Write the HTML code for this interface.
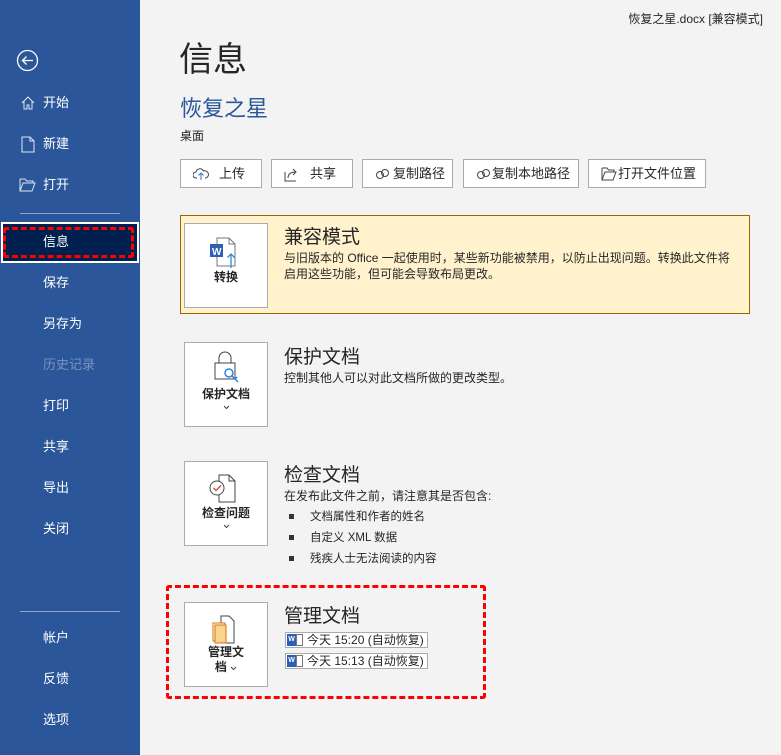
<!DOCTYPE html>
<html><head><meta charset="utf-8"><style>
*{margin:0;padding:0;box-sizing:border-box}
body{width:781px;height:755px;overflow:hidden;background:#f3f3f3;font-family:"Liberation Sans","Noto Sans CJK SC",sans-serif;color:#262626;position:relative}
.a{position:absolute;white-space:nowrap}
#side{position:absolute;left:0;top:0;width:140px;height:755px;background:#2b579a}
.nav{position:absolute;left:43px;color:#fff;font-size:13px;line-height:16px}
.sep{position:absolute;left:20px;width:100px;height:1px;background:#8ea6cc}
.btn{position:absolute;top:159px;height:29px;border:1px solid #ababab;background:#fff;font-size:13px;line-height:27px;color:#262626}
.btn svg{position:absolute;left:12px;top:7px}
.btn span{position:absolute;top:0}
.ib{position:absolute;left:184px;width:84px;height:85px;background:#fff;border:1px solid #ababab;text-align:center;font-size:12px;font-weight:bold;color:#262626}
.h{position:absolute;left:284px;font-size:19px;color:#262626}
.d{position:absolute;left:284px;font-size:12px;color:#262626;line-height:16px}
.li{position:absolute;left:310px;font-size:11.5px}
.li:before{content:"";position:absolute;left:-21px;top:6px;width:5px;height:5px;background:#333}
.ver{position:absolute;left:285px;width:143px;height:16px;border:1px solid #ababab;background:#fff;font-size:12px;line-height:14px}
.ver i{position:absolute;left:1px;top:1px;width:9px;height:12px;background:#2b5fb8;color:#fff;font-size:7px;font-style:normal;font-weight:bold;line-height:12px;text-align:center}
.ver b{position:absolute;left:10px;top:1px;width:7px;height:12px;border:1px solid #777;background:#fff}
.ver span{position:absolute;left:21px;top:0}
.chev{position:absolute;left:38px}
</style></head><body>
<div id="side">
<svg class="a" style="left:16px;top:49px" width="23" height="23"><circle cx="11.5" cy="11.5" r="10" fill="none" stroke="#fff" stroke-width="1.3"/><path d="M17 11.5H6.5M10.5 7.5l-4 4 4 4" fill="none" stroke="#fff" stroke-width="1.3"/></svg>
<svg class="a" style="left:20px;top:95px" width="16" height="16"><path d="M2 8L8 2l6 6M4 6.5V14h3v-4h2v4h3V6.5" fill="none" stroke="#dfe6f1" stroke-width="1"/></svg>
<div class="nav" style="top:95px">开始</div>
<svg class="a" style="left:21px;top:136px" width="14" height="17"><path d="M1 1h8l4 4v11H1z M9 1v4h4" fill="none" stroke="#dfe6f1"/></svg>
<div class="nav" style="top:136px">新建</div>
<svg class="a" style="left:19px;top:178px" width="18" height="14"><path d="M1 1h5l1.5 2H14v2 M1 1v12h12l3-8H4L1 13" fill="none" stroke="#dfe6f1"/></svg>
<div class="nav" style="top:177px">打开</div>
<div class="sep" style="top:213px"></div>
<div class="a" style="left:1px;top:222px;width:138px;height:41px;background:#002050;border:2px solid #fff"></div>
<div class="a" style="left:3px;top:227px;width:131px;height:31px;border:3px dashed #f00;border-radius:3px"></div>
<div class="nav" style="top:234px">信息</div>
<div class="nav" style="top:275px">保存</div>
<div class="nav" style="top:316px">另存为</div>
<div class="nav" style="top:357px;color:#7a93bd">历史记录</div>
<div class="nav" style="top:398px">打印</div>
<div class="nav" style="top:439px">共享</div>
<div class="nav" style="top:480px">导出</div>
<div class="nav" style="top:521px">关闭</div>
<div class="sep" style="top:611px"></div>
<div class="nav" style="top:630px">帐户</div>
<div class="nav" style="top:671px">反馈</div>
<div class="nav" style="top:712px">选项</div>
</div>

<div class="a" style="right:18px;top:10px;font-size:12px;color:#262626">恢复之星.docx [兼容模式]</div>
<div class="a" style="left:179px;top:38px;font-size:34px;line-height:44px;color:#262626">信息</div>
<div class="a" style="left:180px;top:95px;font-size:22px;line-height:28px;color:#2b579a">恢复之星</div>
<div class="a" style="left:180px;top:127px;font-size:12px">桌面</div>

<div class="btn" style="left:180px;width:82px"><svg width="16" height="14"><path d="M4 11H3a3 3 0 010-6 4 4 0 017.5-1A3 3 0 0113 11h-1" fill="none" stroke="#444"/><path d="M8 13V6M5.5 8.5L8 6l2.5 2.5" fill="none" stroke="#2b7cd3"/></svg><span style="left:38px">上传</span></div>
<div class="btn" style="left:271px;width:82px"><svg width="16" height="15"><path d="M1 5v9h11 M4 11c0-4 3-6 8-6M9 2l3 3-3 3" fill="none" stroke="#444"/></svg><span style="left:38px">共享</span></div>
<div class="btn" style="left:362px;width:91px"><svg width="16" height="14"><circle cx="5" cy="8" r="3.5" fill="none" stroke="#444"/><circle cx="10" cy="6" r="3.5" fill="none" stroke="#444"/></svg><span style="left:30px">复制路径</span></div>
<div class="btn" style="left:463px;width:116px"><svg width="16" height="14"><circle cx="5" cy="8" r="3.5" fill="none" stroke="#444"/><circle cx="10" cy="6" r="3.5" fill="none" stroke="#444"/></svg><span style="left:28px">复制本地路径</span></div>
<div class="btn" style="left:588px;width:118px"><svg width="16" height="14"><path d="M1 1h5l1.5 2H13v2 M1 1v12h11l3-8H4L1 13" fill="none" stroke="#444"/></svg><span style="left:29px">打开文件位置</span></div>

<div class="a" style="left:180px;top:215px;width:570px;height:99px;background:#fff2cc;border:1px solid #9c6500"></div>
<div class="ib" style="top:223px">
<svg style="position:absolute;left:22px;top:12px" width="40" height="32"><path d="M10 2h12l6 6v22H10z M22 2v6h6" fill="#fff" stroke="#777"/><rect x="3" y="8" width="13" height="13" fill="#2b5fb8"/><text x="5" y="19" fill="#fff" font-size="10" font-weight="bold" font-family="Liberation Sans">W</text><path d="M24 32V18M20.5 21.5L24 18l3.5 3.5" fill="none" stroke="#2b88d8" stroke-width="1.3"/></svg>
<div style="position:absolute;top:44px;width:100%">转换</div></div>
<div class="h" style="top:222px">兼容模式</div>
<div class="d" style="top:250px">与旧版本的 Office 一起使用时，某些新功能被禁用，以防止出现问题。转换此文件将<br>启用这些功能，但可能会导致布局更改。</div>

<div class="ib" style="top:342px">
<svg style="position:absolute;left:28px;top:8px" width="30" height="32"><path d="M6 12V7a6 6 0 0112 0v5 M2 12h20v16H2z" fill="none" stroke="#444"/><circle cx="16" cy="22" r="4" fill="#fff" stroke="#2b88d8" stroke-width="1.5"/><path d="M19 25l6 6M22 28l2-2" stroke="#2b88d8" stroke-width="1.5"/></svg>
<div style="position:absolute;top:42px;width:100%">保护文档</div><svg class="chev" style="top:62px" width="7" height="5"><path d="M1 1l2.5 2.5L6 1" fill="none" stroke="#444"/></svg></div>
<div class="h" style="top:342px">保护文档</div>
<div class="d" style="top:370px">控制其他人可以对此文档所做的更改类型。</div>

<div class="ib" style="top:461px">
<svg style="position:absolute;left:22px;top:12px" width="36" height="30"><path d="M12 1h10l6 6v21H12z M22 1v6h6" fill="#fff" stroke="#444"/><circle cx="10" cy="14" r="7" fill="#fff" stroke="#444"/><path d="M6.5 14l2.5 2.5 5-5" fill="none" stroke="#d83b3b" stroke-width="1.3"/></svg>
<div style="position:absolute;top:42px;width:100%">检查问题</div><svg class="chev" style="top:62px" width="7" height="5"><path d="M1 1l2.5 2.5L6 1" fill="none" stroke="#444"/></svg></div>
<div class="h" style="top:460px">检查文档</div>
<div class="d" style="top:488px">在发布此文件之前，请注意其是否包含:</div>
<div class="li" style="top:508px">文档属性和作者的姓名</div>
<div class="li" style="top:529px">自定义 XML 数据</div>
<div class="li" style="top:550px">残疾人士无法阅读的内容</div>

<div class="ib" style="top:602px">
<svg style="position:absolute;left:24px;top:12px" width="36" height="30"><path d="M12 1h8l5 5v22H12z" fill="#fff" stroke="#444"/><rect x="4" y="8" width="12" height="18" fill="#fff" stroke="#d9730d"/><rect x="6" y="10" width="11" height="18" fill="#f8d58a" stroke="#d9730d"/></svg>
<div style="position:absolute;top:42px;width:100%;line-height:15px">管理文<br>档 <svg width="7" height="5"><path d="M1 1l2.5 2.5L6 1" fill="none" stroke="#444"/></svg></div></div>
<div class="h" style="top:601px">管理文档</div>
<div class="ver" style="top:632px"><b></b><i>W</i><span>今天 15:20 (自动恢复)</span></div>
<div class="ver" style="top:653px"><b></b><i>W</i><span>今天 15:13 (自动恢复)</span></div>
<div class="a" style="left:166px;top:585px;width:320px;height:114px;border:3px dashed #f00;border-radius:3px"></div>
</body></html>
